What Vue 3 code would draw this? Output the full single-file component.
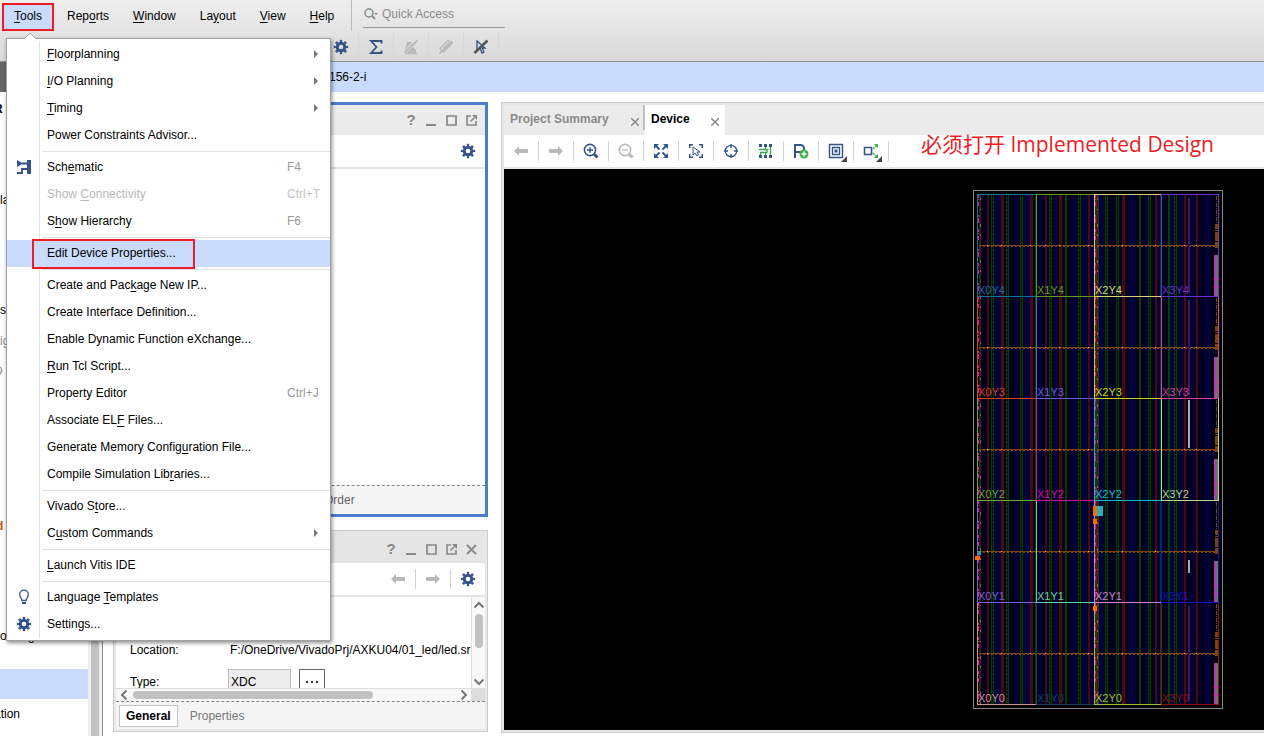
<script setup>
const BLUE = '#34538a'
const GREY = '#b9b9b9'

const icons = {
  gear: `<circle cx="8" cy="8" r="3.8" fill="none" stroke="${BLUE}" stroke-width="3"/><circle cx="8" cy="8" r="6" fill="none" stroke="${BLUE}" stroke-width="2.400" pathLength="16" stroke-dasharray="1 1" stroke-dashoffset="0.5"/>`,
  sigma: `<path d="M13.500 4.500V2H3l5.500 6L3 14h10.500v-2.500" fill="none" stroke="${BLUE}" stroke-width="1.800"/>`,
  highlightOff: `<path d="M4 3h6v5l3 3v3H1z" fill="${GREY}"/><path d="M1 14L14 1" stroke="#dedede" stroke-width="3.500"/><path d="M1.500 13.500L14.500 1.500" stroke="${GREY}" stroke-width="2"/><path d="M2 14.500h12" stroke="${GREY}" stroke-width="1.500"/>`,
  markOff: `<path d="M2 9.500L10 1.500l4 3-8.500 8.500zM5 10l6-6" fill="none" stroke="${GREY}" stroke-width="1.300"/><path d="M1.500 14.500L14.500 2.500" stroke="${GREY}" stroke-width="2"/>`,
  cursorOff: `<path d="M4 2v10l3-3 2 5 2-1-2-4h3z" fill="none" stroke="${BLUE}" stroke-width="1.300"/><path d="M1.500 14L14.500 1.500" stroke="#555" stroke-width="2.500"/>`,
  back: `<path d="M1 8l5-5v3h9v4H6v3z" fill="${GREY}"/>`,
  forward: `<path d="M15 8l-5-5v3H1v4h9v3z" fill="${GREY}"/>`,
  zoomIn: `<circle cx="7" cy="7" r="5.600" fill="none" stroke="${BLUE}" stroke-width="1.600"/><path d="M4 7h6M7 4v6" stroke="${BLUE}" stroke-width="1.300"/><path d="M11 11l3.500 3.500" stroke="${BLUE}" stroke-width="3"/>`,
  zoomOut: `<circle cx="7" cy="7" r="5.600" fill="none" stroke="${GREY}" stroke-width="1.600"/><path d="M4 7h6" stroke="${GREY}" stroke-width="1.300"/><path d="M11 11l3.500 3.500" stroke="${GREY}" stroke-width="3"/>`,
  fit: `<path d="M1 1h5L1 6zM15 1h-5l5 5zM1 15h5l-5-5zM15 15h-5l5-5z" fill="${BLUE}"/><path d="M2 2l4.500 4.500M14 2L9.500 6.500M2 14l4.500-4.500M14 14L9.500 9.500" stroke="${BLUE}" stroke-width="1.800"/>`,
  selectArea: `<path d="M1.700 5V1.700H5M11 1.700h3.300V5M14.300 11v3.300H11M5 14.300H1.700V11" fill="none" stroke="${BLUE}" stroke-width="1.500"/><path d="M5 4v8l2-2 2 3 1.500-1L9 9h3z" fill="#fff" stroke="${BLUE}"/>`,
  target: `<circle cx="8" cy="8" r="5.700" fill="none" stroke="${BLUE}" stroke-width="1.300"/><path d="M8 1v4M8 11v4M1 8h4M11 8h4" stroke="${BLUE}" stroke-width="1.400"/>`,
  routing: `<path d="M1 1h3v3H1zM6 1h3v3H6zM11 1h3v3h-3zM1 12h3v3H1zM6 12h3v3H6zM11 12h3v3h-3z" fill="${BLUE}"/><path d="M1 6.500h6.500V4M2.500 12V9.500H9V6.500h1.500M12.500 4v8M7.500 12V9.500" fill="none" stroke="#3ba54a" stroke-width="1.300"/>`,
  pin: `<path d="M2 15V2h5.500a3.200 3.200 0 010 7H2" fill="none" stroke="${BLUE}" stroke-width="2"/><circle cx="11" cy="11" r="4.500" fill="#43b149"/><path d="M8.500 11h5M11 8.500v5" stroke="#fff" stroke-width="1.400"/>`,
  layers: `<path d="M1.500 1.500h13v13h-13zM4.500 4.500h7v7h-7z" fill="none" stroke="${BLUE}" stroke-width="1.400"/><path d="M6.500 6.500h3v3h-3z" fill="${BLUE}"/>`,
  expand: `<path d="M1.500 4.500h7v7h-7z" fill="none" stroke="${BLUE}" stroke-width="1.600"/><path d="M10 6l4-4M10 10l4 4" stroke="#43b149" stroke-width="1.500" stroke-dasharray="2 1"/><path d="M11 1h4v4zM15 11v4h-4z" fill="#43b149"/>`,
  minimize: `<path d="M3 13h10" stroke="#888" stroke-width="2"/>`,
  maximize: `<path d="M4 4h9v9H4z" fill="none" stroke="#888" stroke-width="1.700"/>`,
  float: `<path d="M8 4H4v9h9V9M7.500 9.500l4-4" fill="none" stroke="#888" stroke-width="1.600"/><path d="M9 3h5v5z" fill="#888"/>`,
  close: `<path d="M4 4l9 9M13 4l-9 9" stroke="#888" stroke-width="1.800"/>`,
  schematic: `<path d="M1 1l6 3.500L1 8zM11 1h4v14h-4z" fill="${BLUE}"/><path d="M6 4.500h5M11 10H6v4H1" fill="none" stroke="${BLUE}" stroke-width="1.800"/>`,
  bulb: `<path d="M6 11.500c0-2-2.300-3-2.300-6a4.300 4.300 0 018.600 0c0 3-2.300 4-2.300 6z" fill="none" stroke="${BLUE}" stroke-width="1.300"/><path d="M6 14h4" stroke="${BLUE}" stroke-width="2"/>`,
}

const topMenus = [
  { pre: 'Rep', key: 'o', post: 'rts' },
  { pre: '', key: 'W', post: 'indow' },
  { pre: 'La', key: 'y', post: 'out' },
  { pre: '', key: 'V', post: 'iew' },
  { pre: '', key: 'H', post: 'elp' },
]

/* An underscore in a label precedes its mnemonic letter. */
function item(label, extra = {}) {
  const at = label.indexOf('_')
  return at < 0
    ? { pre: label, key: '', post: '', ...extra }
    : { pre: label.slice(0, at), key: label[at + 1], post: label.slice(at + 2), ...extra }
}

const menuGroups = [
  [
    item('_Floorplanning', { sub: true }),
    item('_I/O Planning', { sub: true }),
    item('_Timing', { sub: true }),
    item('Power Constraints Advisor...'),
  ],
  [
    item('Sch_ematic', { icon: 'schematic', keys: 'F4' }),
    item('Show _Connectivity', { keys: 'Ctrl+T', disabled: true }),
    item('S_how Hierarchy', { keys: 'F6' }),
  ],
  [item('Edit Device Properties...', { active: true })],
  [
    item('Create and Pac_kage New IP...'),
    item('Create Interface Definition...'),
    item('Enable Dynamic Function eXchange...'),
    item('_Run Tcl Script...'),
    item('Property Editor', { keys: 'Ctrl+J' }),
    item('Associate EL_F Files...'),
    item('Generate Memory Config_uration File...'),
    item('Compile Simulation Lib_raries...'),
  ],
  [item('Vivado S_tore...'), item('C_ustom Commands', { sub: true })],
  [item('_Launch Vitis IDE')],
  [item('Language _Templates', { icon: 'bulb' }), item('Settings...', { icon: 'gear' })],
]

const mainTools = [
  ['gear', 'Settings'],
  ['sigma', 'Report'],
  ['highlightOff', 'Unhighlight'],
  ['markOff', 'Unmark'],
  ['cursorOff', 'Unselect'],
]

const deviceTools = [
  ['back', 'Back'],
  ['forward', 'Forward'],
  ['zoomIn', 'Zoom in'],
  ['zoomOut', 'Zoom out'],
  ['fit', 'Fit'],
  ['selectArea', 'Select area'],
  ['target', 'Autofit'],
  ['routing', 'Routing resources'],
  ['pin', 'Add pin'],
  ['layers', 'Cell layers', true],
  ['expand', 'Expand', true],
]

const navRows = [
  { text: 'R', cls: 'bold first' },
  { text: 'la', cls: 'gap-l' },
  { text: 'si', cls: 'gap-xl' },
  { text: 'ig', cls: 'muted' },
  { text: 'D', cls: 'muted tuck' },
  { text: 'd', cls: 'bold orange gap-xxl' },
  { text: 'ocking', cls: 'gap-xl' },
  { text: '', cls: 'selected gap-s' },
  { text: 'ation', cls: 'tuck' },
]

/* Device floorplan: clock regions and the resource columns behind them. */
const colX = [4, 63, 121, 188, 245]
const rowH = 102
const regionColors = [
  ['#d09090', '#104058', '#a8b838', '#901010'],
  ['#7860d0', '#60d0a8', '#d080d0', '#1010c8'],
  ['#6aa838', '#d0109a', '#10b8c8', '#b0d890'],
  ['#d84018', '#6060d8', '#d0d010', '#d83ca0'],
  ['#0f7098', '#629a14', '#d8d07a', '#6a30d0'],
]
const regions = regionColors.flatMap((row, r) =>
  row.map((color, c) => ({
    name: `X${c}Y${r}`,
    color,
    x: colX[c],
    y: 4 + (4 - r) * rowH,
    w: colX[c + 1] - colX[c],
  })),
)
const bands = [0, 1, 2, 3, 4].map((n) => 4 + n * rowH)
const pinstripes = Array.from({ length: 79 }, (_, n) => 8 + n * 3)
const navyBlocks = [[22, 4], [41, 5], [51, 5], [66, 4], [81, 4], [98, 5], [110, 4], [117, 3], [127, 4], [156, 7], [172, 4], [184, 3], [197, 4], [206, 4], [218, 3], [232, 5]]
const redCols = [[14, 2], [28, 3], [57, 3], [72, 2], [86, 3], [115, 2], [149, 3], [182, 2], [211, 2], [223, 2]]
const ladderCols = [18, 33, 47, 76, 105, 132, 143, 175, 201]
const greenCols = [62, 92, 166, 187, 195]
const brightDots = [14, 28, 57, 72, 86, 115, 149, 182, 211, 223]
</script>

<template>
  <div class="app">
    <header class="header">
      <div class="menubar">
        <nav class="menus">
          <button class="menu-btn tools-btn" type="button"><u>T</u>ools</button>
          <button v-for="m in topMenus" :key="m.post" class="menu-btn" type="button">{{ m.pre }}<u>{{ m.key }}</u>{{ m.post }}</button>
        </nav>
        <label class="quick">
          <svg width="16" height="14" viewBox="0 0 16 14"><circle cx="6" cy="6" r="4" fill="none" stroke="#888" stroke-width="1.500" /><path d="M9 9l3 3" stroke="#888" stroke-width="2" /><path d="M11 6h4l-2 2z" fill="#888" /></svg>
          <input type="text" placeholder="Quick Access" aria-label="Quick Access" />
        </label>
      </div>
      <div class="toolbar">
        <button v-for="t in mainTools" :key="t[0]" class="tool" type="button" :aria-label="t[1]">
          <svg width="16" height="16" viewBox="0 0 16 16" v-html="icons[t[0]]"></svg>
        </button>
      </div>
    </header>

    <div class="titlebar"><span>156-2-i</span></div>

    <div class="workspace">
      <aside class="navigator">
        <a v-for="(n, i) in navRows" :key="i" href="#" class="nav-row" :class="n.cls">{{ n.text }}</a>
      </aside>
      <div class="nav-scroll"><i></i></div>

      <div class="middle">
        <section class="panel focused">
          <div class="panel-head">
            <button class="win q" type="button">?</button>
            <button v-for="w in ['minimize', 'maximize', 'float']" :key="w" class="win" type="button" :aria-label="w">
              <svg width="16" height="16" viewBox="0 0 16 16" v-html="icons[w]"></svg>
            </button>
          </div>
          <div class="panel-tools">
            <button class="tool" type="button" aria-label="Settings"><svg width="16" height="16" viewBox="0 0 16 16" v-html="icons.gear"></svg></button>
          </div>
          <div class="panel-body"></div>
          <div class="order-tabs"><a href="#">Order</a></div>
        </section>

        <section class="panel props">
          <div class="panel-head">
            <button class="win q" type="button">?</button>
            <button v-for="w in ['minimize', 'maximize', 'float', 'close']" :key="w" class="win" type="button" :aria-label="w">
              <svg width="16" height="16" viewBox="0 0 16 16" v-html="icons[w]"></svg>
            </button>
          </div>
          <div class="panel-tools">
            <button v-for="t in ['back', 'forward', 'gear']" :key="t" class="tool" type="button" :aria-label="t">
              <svg width="16" height="16" viewBox="0 0 16 16" v-html="icons[t]"></svg>
            </button>
          </div>
          <div class="scroll-area">
            <div class="fields">
              <div class="field"><span class="name">Location:</span><span class="path">F:/OneDrive/VivadoPrj/AXKU04/01_led/led.srcs</span></div>
              <div class="field">
                <label class="name" for="ftype">Type:</label>
                <input id="ftype" type="text" value="XDC" readonly />
                <button class="more" type="button" aria-label="Browse"><i></i><i></i><i></i></button>
              </div>
            </div>
            <div class="vbar">
              <svg width="12" height="8" viewBox="0 0 12 8"><path d="M1.500 6.500L6 2l4.500 4.500" fill="none" stroke="#777" stroke-width="2" /></svg>
              <i></i>
              <svg class="down" width="12" height="8" viewBox="0 0 12 8"><path d="M1.500 1.500L6 6l4.500-4.500" fill="none" stroke="#777" stroke-width="2" /></svg>
            </div>
            <div class="hbar">
              <svg width="8" height="12" viewBox="0 0 8 12"><path d="M6.500 1.500L2 6l4.500 4.500" fill="none" stroke="#777" stroke-width="2" /></svg>
              <i></i>
              <svg class="right" width="8" height="12" viewBox="0 0 8 12"><path d="M1.500 1.500L6 6l-4.500 4.500" fill="none" stroke="#777" stroke-width="2" /></svg>
            </div>
            <div class="corner"></div>
          </div>
          <div class="prop-tabs">
            <button class="on" type="button">General</button>
            <button type="button">Properties</button>
          </div>
        </section>
      </div>

      <section class="device-panel">
        <div class="tabs">
          <div class="tab">
            <button type="button">Project Summary</button>
            <button class="x" type="button" aria-label="Close Project Summary"><svg width="8" height="8" viewBox="0 0 8 8"><path d="M0 0l8 8M8 0L0 8" stroke="#888" stroke-width="1.500" /></svg></button>
          </div>
          <div class="tab current">
            <button type="button">Device</button>
            <button class="x" type="button" aria-label="Close Device"><svg width="8" height="8" viewBox="0 0 8 8"><path d="M0 0l8 8M8 0L0 8" stroke="#888" stroke-width="1.500" /></svg></button>
          </div>
        </div>
        <div class="device-tools">
          <button v-for="t in deviceTools" :key="t[0]" class="tool" type="button" :aria-label="t[1]">
            <svg width="16" height="16" viewBox="0 0 16 16" v-html="icons[t[0]]"></svg>
            <i v-if="t[2]" class="has-menu"></i>
          </button>
        </div>
        <div class="canvas">
          <svg class="die" width="250" height="519" viewBox="0 0 250 519" shape-rendering="crispEdges">
            <rect x="0.500" y="0.500" width="249" height="518" fill="#000" stroke="#858585" />
            <rect v-for="x in pinstripes" :key="'p' + x" :x="x" y="5" width="2" height="509" fill="#00002c" />
            <rect v-for="b in navyBlocks" :key="'n' + b[0]" :x="b[0]" y="5" :width="b[1]" height="509" fill="#00003a" />
            <rect v-for="b in redCols" :key="'r' + b[0]" :x="b[0]" y="5" :width="b[1]" height="509" fill="#480814" />
            <g v-for="x in ladderCols" :key="'l' + x">
              <rect :x="x" y="5" width="3" height="509" fill="#004000" />
              <line :x1="x + 1.5" y1="5" :x2="x + 1.5" y2="514" stroke="#000" stroke-dasharray="3 1" />
            </g>
            <rect v-for="x in greenCols" :key="'g' + x" :x="x" y="5" width="2" height="509" fill="#004000" />
            <rect x="6" y="5" width="2" height="509" fill="#30240f" />
            <rect x="122" y="5" width="4" height="509" fill="#342818" />
            <path d="M5.500 5v509M122.500 5v509" stroke="#e010b0" stroke-dasharray="3 1 1 2 4 9 2 1 5 6" />
            <path d="M7.500 8v506M124.500 8v506" stroke="#8a6a30" stroke-dasharray="2 9 1 14 3 7" />
            <g v-for="(y, n) in bands" :key="'b' + y">
              <path :d="`M6 ${y + 51.5}H121M124 ${y + 51.5}H243`" stroke="#7c440c" />
              <path :d="`M6 ${y + 52.5}H121M124 ${y + 52.5}H243`" stroke="#7c440c" stroke-dasharray="2 2" />
              <rect v-for="x in brightDots" :key="x" :x="x" :y="y + 51" width="1" height="1" fill="#e0b890" />
              <path :d="`M243.500 ${y + 2}v28`" stroke="#7c440c" stroke-dasharray="4 1 1 1" />
              <rect x="242" :y="y + 30" width="3" height="24" fill="#7c440c" />
              <path :d="`M242 ${y + 35.5}h3m-3 2h3m-3 10h3`" stroke="#000" />
              <rect x="241" :y="y + 61" width="4" height="41" fill="#707070" />
              <path :d="`M241.500 ${y + 61}v41M241 ${y + 85.5}h4M241 ${y + 93.5}h4`" stroke="#f010c0" />
              <rect v-if="n !== 2 && n !== 3" x="215" :y="y + 4" width="2" height="95" fill="#481070" />
            </g>
            <rect x="215" y="210" width="2" height="48" fill="#a8a8b0" />
            <rect x="215" y="370" width="2" height="13" fill="#a8a8b0" />
            <g v-for="r in regions" :key="r.name">
              <rect :x="r.x + 0.5" :y="r.y + 0.5" :width="r.w" :height="rowH" fill="none" :stroke="r.color" />
              <text :x="r.x + 1" :y="r.y + 100" :fill="r.color" class="region">{{ r.name }}</text>
            </g>
            <rect x="124" y="316" width="6" height="10" fill="#28b0b8" />
            <path d="M120 316h4v10h-4zM120 329h4v5h-4zM2 366h5v4H2zM120 416h4v5h-4z" fill="#ff6a00" />
            <rect x="5" y="361" width="3" height="4" fill="#30a098" />
          </svg>
          <p class="note">必须打开 Implemented Design</p>
        </div>
      </section>
    </div>

    <div class="menu" role="menu">
      <svg class="tip" width="14" height="8" viewBox="0 0 14 8"><path d="M1 8l6-6 6 6" fill="#fff" stroke="#aaa" /></svg>
      <div v-for="(g, gi) in menuGroups" :key="gi" class="group">
        <button v-for="it in g" :key="it.pre + it.post" class="item" :class="{ active: it.active }" :disabled="it.disabled" type="button" role="menuitem">
          <span class="ico"><svg v-if="it.icon" width="16" height="16" viewBox="0 0 16 16" v-html="icons[it.icon]"></svg></span>
          <span class="label">{{ it.pre }}<u v-if="it.key">{{ it.key }}</u>{{ it.post }}</span>
          <span v-if="it.keys" class="keys">{{ it.keys }}</span>
          <i v-if="it.sub" class="sub"></i>
        </button>
      </div>
    </div>
  </div>
</template>

<style>
body {
  margin: 0;
  overflow: hidden;
}
</style>

<style scoped>
.app {
  position: relative;
  display: flex;
  flex-direction: column;
  height: 100vh;
  overflow: hidden;
  background: #fff;
  color: #000;
  font: 12px/16px "Liberation Sans", Arial, sans-serif;
}
button,
input {
  margin: 0;
  padding: 0;
  border: 0;
  background: none;
  color: inherit;
  font: inherit;
}
a {
  color: inherit;
  text-decoration: none;
}
svg {
  display: block;
}
u {
  text-underline-offset: 2px;
}

/* header */
.header {
  flex: none;
  height: 61px;
  border-bottom: 1px solid #929292;
  background: linear-gradient(#eeeeee, #d9d9d9);
}
.menubar {
  display: flex;
  height: 31px;
}
.menus {
  display: flex;
  align-items: center;
  gap: 24px;
  width: 352px;
  border-right: 1px solid #bbb;
  box-sizing: border-box;
}
.menu-btn {
  height: 100%;
}
.tools-btn {
  width: 52px;
  height: 28px;
  margin: 3px -11px 0 2px;
  padding-bottom: 2px;
  border: 2px solid #ee1c25;
  background: #c9dcfd;
}
.quick {
  display: flex;
  align-items: center;
  width: 142px;
  height: 27px;
  margin-left: 11px;
  border-bottom: 1px solid #999;
}
.quick input {
  width: 110px;
  margin-left: 3px;
  outline: 0;
}
.quick input::placeholder {
  color: #8a8a8a;
  opacity: 1;
}
.toolbar {
  display: flex;
  height: 30px;
  padding: 1px 0 0 324px;
  box-sizing: border-box;
}
.tool {
  position: relative;
  display: flex;
  align-items: center;
  justify-content: center;
  width: 35px;
}
.toolbar .tool {
  border-right: 1px solid #d8d8d8;
  box-sizing: border-box;
}
.titlebar {
  flex: none;
  height: 30px;
  padding-left: 323px;
  border-left: 6px solid #666;
  background: #c9dcfd;
  line-height: 30px;
}

/* workspace */
.workspace {
  flex: 1;
  display: flex;
  min-height: 0;
}
.navigator {
  flex: none;
  display: flex;
  flex-direction: column;
  width: 88px;
  overflow: hidden;
}
.nav-row {
  flex: none;
  height: 30px;
  margin-top: 1px;
  line-height: 30px;
  white-space: nowrap;
}
.first { margin-top: 2px; text-indent: -6px; }
.bold { font-weight: bold; }
.muted { color: #888; }
.orange { color: #c8581c; }
.tuck { margin-top: 0; text-indent: -6px; }
.gap-s { margin-top: 18px; }
.gap-l { margin-top: 61px; }
.gap-xl { margin-top: 80px; }
.gap-xxl { margin-top: 125px; text-indent: -4px; }
.selected { background: #c9dcfd; }
.nav-scroll {
  flex: none;
  width: 15px;
  box-sizing: border-box;
  padding: 0 3px;
  border-right: 1px solid #8c8c8c;
  background: #efefef;
}
.nav-scroll i {
  display: block;
  height: 100%;
  background: #c1c1c1;
}
.middle {
  flex: none;
  display: grid;
  grid-template-rows: 415fr 202fr;
  gap: 13px;
  width: 375px;
  padding: 10px 0 4px;
  margin-left: 10px;
}
.panel {
  display: flex;
  flex-direction: column;
  box-sizing: border-box;
  min-height: 0;
}
.focused {
  border: 3px solid #4a7dcb;
}
.props {
  border: 1px solid #ccc;
  padding: 0 2px 2px;
  background: #e8e8e8;
}
.panel-head {
  flex: none;
  display: flex;
  align-items: center;
  justify-content: flex-end;
  height: 30px;
  padding-right: 4px;
  background: #ebebeb;
}
.props .panel-head {
  height: 32px;
  padding-top: 4px;
  box-sizing: border-box;
  background: #e5e5e5;
}
.win {
  display: flex;
  justify-content: center;
  width: 20px;
  color: #888;
}
.q {
  font-size: 15px;
  font-weight: bold;
}
.panel-tools {
  flex: none;
  display: flex;
  justify-content: flex-end;
  height: 32px;
  border-bottom: 2px solid #e4e4e4;
  background: #fff;
}
.props .panel-tools .tool + .tool {
  background: linear-gradient(#d4d4d4, #d4d4d4) 0 50% / 1px 20px no-repeat;
}
.panel-body {
  flex: 1;
}
.order-tabs {
  flex: none;
  height: 28px;
  padding-left: 208px;
  border-top: 1px dashed #888;
  background: #f5f5f5;
  color: #666;
  line-height: 28px;
}
.scroll-area {
  flex: 1;
  display: grid;
  grid-template-columns: minmax(0, 1fr) 14px;
  grid-template-rows: minmax(0, 1fr) 13px;
  min-height: 0;
  background: #fff;
}
.fields {
  overflow: hidden;
  padding: 42px 0 0 14px;
}
.field {
  display: flex;
  height: 22px;
  margin-bottom: 8px;
  line-height: 22px;
  white-space: nowrap;
}
.name {
  flex: none;
  width: 98px;
}
label.name {
  line-height: 26px;
}
.path {
  padding-left: 2px;
}
.field input {
  width: 63px;
  height: 26px;
  box-sizing: border-box;
  padding-left: 2px;
  border: 1px solid #bbb;
  background: #ececec;
}
.more {
  display: flex;
  align-items: center;
  justify-content: center;
  gap: 3px;
  width: 26px;
  height: 26px;
  margin-left: 8px;
  border: 1px solid #666;
}
.more i {
  width: 2px;
  height: 2px;
  background: #333;
}
.vbar,
.hbar {
  display: flex;
  align-items: center;
  background: #f8f8f8;
}
.vbar {
  flex-direction: column;
  padding: 4px 0 2px;
  border-left: 1px solid #ddd;
}
.vbar i {
  width: 8px;
  height: 34px;
  margin-top: 5px;
  border-radius: 4px;
  background: #c1c1c1;
}
.down { margin-top: auto; }
.hbar {
  padding: 0 3px 0 4px;
  border-top: 1px solid #ddd;
}
.hbar i {
  width: 240px;
  height: 8px;
  margin-left: 5px;
  border-radius: 4px;
  background: #c1c1c1;
}
.right { margin-left: auto; }
.corner { background: #ddd; }
.prop-tabs {
  flex: none;
  display: flex;
  align-items: center;
  height: 27px;
  padding-left: 3px;
  border-top: 1px dashed #888;
  background: #f5f5f5;
  color: #777;
}
.prop-tabs button {
  height: 22px;
  padding: 0 12px;
}
.prop-tabs .on {
  padding: 0 6px;
  border: 1px solid #c4c4c4;
  background: #fff;
  color: #000;
  font-weight: bold;
}

/* device view */
.device-panel {
  flex: 1;
  display: flex;
  flex-direction: column;
  min-width: 0;
  margin: 10px 0 3px 13px;
  border: 1px solid #ccc;
  border-right: 0;
  padding: 2px 0 2px 2px;
  background: #e5e5e5;
}
.tabs {
  flex: none;
  display: flex;
  height: 30px;
  background: #ebebeb;
}
.tab {
  display: flex;
  align-items: center;
  justify-content: space-between;
  box-sizing: border-box;
  width: 141px;
  padding: 0 6px;
  background: linear-gradient(#c0c0c0, #c0c0c0) 100% 0 / 2px 25px no-repeat;
  color: #8a8a8a;
  font-weight: bold;
}
.tab button {
  padding-bottom: 2px;
}
.tab .x {
  padding: 3px 0 0;
}
.current {
  width: 80px;
  background: #fff;
  color: #000;
}
.device-tools {
  flex: none;
  display: flex;
  height: 32px;
  border-bottom: 2px solid #e4e4e4;
  background: #fff;
}
.device-tools .tool {
  box-sizing: border-box;
  padding-right: 2px;
  background: linear-gradient(#d4d4d4, #d4d4d4) 100% 50% / 1px 20px no-repeat;
}
.has-menu {
  position: absolute;
  right: 7px;
  bottom: 5px;
  border: 3px solid #444;
  border-top-color: transparent;
  border-left-color: transparent;
}
.canvas {
  position: relative;
  flex: 1;
  display: flex;
  justify-content: flex-end;
  align-items: flex-start;
  min-height: 0;
  padding: 21px 41px 0 0;
  background: #000;
}
.region {
  font: 11px "Liberation Sans", Arial, sans-serif;
}
.note {
  position: absolute;
  right: 50px;
  top: -41px;
  margin: 0;
  color: #ee1c25;
  font: 21px/32px "Open Sans", "Noto Sans CJK SC", sans-serif;
  white-space: nowrap;
}

/* tools menu */
.menu {
  position: absolute;
  left: 6px;
  top: 38px;
  width: 325px;
  box-sizing: border-box;
  padding: 2px 0;
  border: 1px solid #a0a0a0;
  background: linear-gradient(#e2e2e2, #e2e2e2) 32px 2px / 1px calc(100% - 4px) no-repeat #fff;
  box-shadow: 1px 2px 4px rgba(0, 0, 0, 0.45);
}
.tip {
  position: absolute;
  left: 16px;
  top: -8px;
}
.group + .group {
  padding-top: 5px;
  background: linear-gradient(#e2e2e2, #e2e2e2) 35px 2px / 100% 1px no-repeat;
}
.item {
  position: relative;
  display: flex;
  align-items: center;
  width: 100%;
  height: 27px;
  padding-bottom: 2px;
  text-align: left;
}
.ico {
  width: 31px;
  padding-left: 9px;
  box-sizing: border-box;
}
.label {
  flex: 1;
  padding-left: 9px;
}
.item:disabled {
  color: #b8b8b8;
}
.keys {
  width: 43px;
  color: #999;
}
.item:disabled .keys {
  color: #c4c4c4;
}
.sub {
  margin-right: 12px;
  border: 4px solid transparent;
  border-left: 4px solid #777;
  border-right: 0;
}
.active {
  background: #c9dcfd;
}
.active::after {
  content: "";
  position: absolute;
  left: 25px;
  top: -1px;
  width: 163px;
  height: 30px;
  box-sizing: border-box;
  border: 2px solid #ee1c25;
}
</style>
